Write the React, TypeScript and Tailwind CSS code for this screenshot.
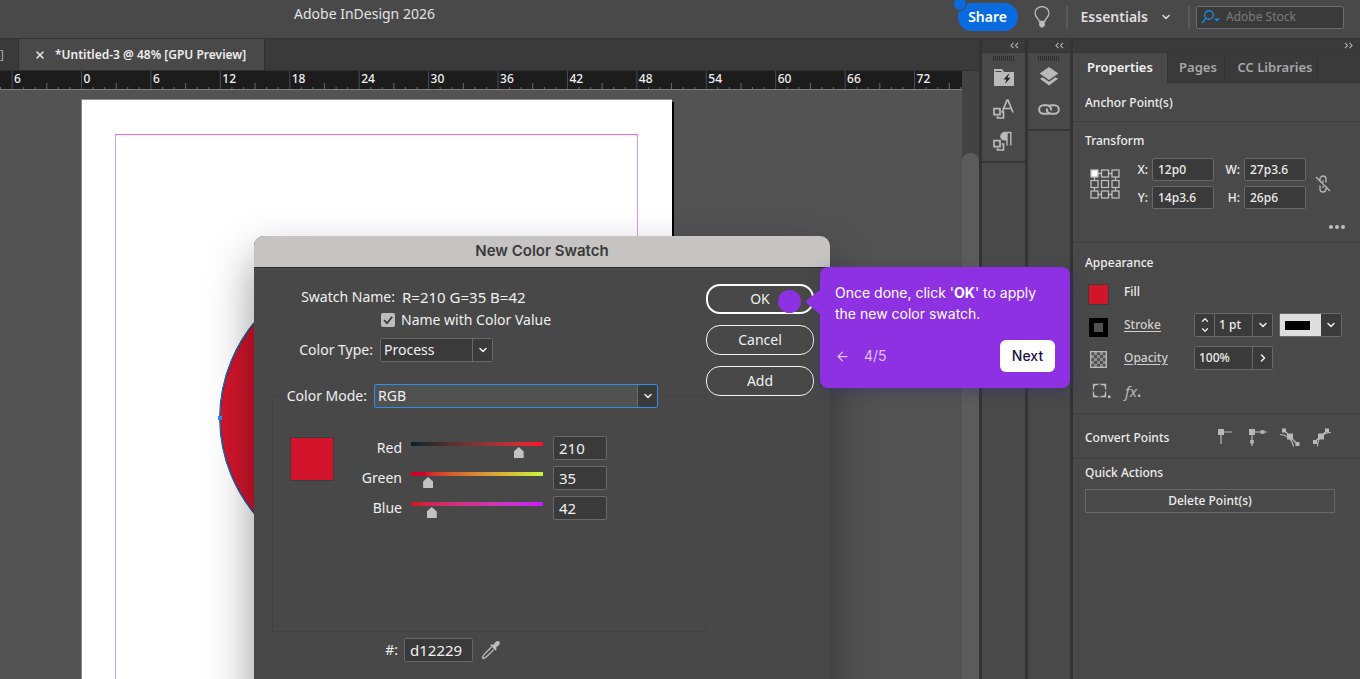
import { useState } from "react"
import type { ReactNode } from "react"
import clsx from "clsx"
import { ArrowLeft, ChevronDown, ChevronRight, ChevronUp, X } from "lucide-react"

// Six picas on the ruler at the current zoom
const RULER_STEP = 69.42
const RULER_ORIGIN = 81.5

function Ruler() {
  const ticks = []
  for (let i = -7; i <= 76; i++) {
    const x = RULER_ORIGIN + (i * RULER_STEP) / 6
    const major = i % 6 === 0
    const half = i % 3 === 0
    ticks.push(
      <line
        key={i}
        x1={x}
        x2={x}
        y1={major ? 0 : half ? 12 : 16}
        y2={18}
        stroke={major ? "#4d4d4d" : "#6a6a6a"}
      />
    )
  }

  return (
    <svg className="block h-[18px] w-full bg-[#1c1c1c]" aria-hidden="true">
      {ticks}
      {Array.from({ length: 14 }, (_, i) => i - 1).map((i) => (
        <text
          key={i}
          x={RULER_ORIGIN + i * RULER_STEP + 2}
          y={12}
          className="fill-[#f0f0f0] text-[12px] font-medium"
        >
          {Math.abs(i * 6)}
        </text>
      ))}
    </svg>
  )
}

function Artboard() {
  return (
    <div className="relative flex-1 overflow-hidden bg-[#535353] border-t border-[#808080]">
      <div className="absolute left-[83px] top-[12px] h-[800px] w-[591px] bg-black" />
      <div className="absolute left-[81px] top-[9px] h-[800px] w-[591px] border-l border-t border-[#8c8c8c] bg-white" />
      <div className="absolute left-[115px] top-[44px] h-[800px] w-[523px] border-x border-t border-x-[#cf9bff] border-t-[#ff5cf4]" />
      <svg className="absolute left-[215px] top-[170px]" width="330" height="320" viewBox="0 0 330 320">
        <ellipse cx="163" cy="158" rx="158" ry="153" fill="#d3152c" stroke="#1c2c44" strokeWidth="1.6" />
        <ellipse cx="163" cy="158" rx="158" ry="153" fill="none" stroke="#2179d0" strokeWidth="1" />
        <rect x="3" y="156" width="4" height="4" fill="#1e90ff" />
      </svg>
    </div>
  )
}

function DropDown({
  options,
  id,
  className,
  boxClassName,
}: {
  options: string[]
  id: string
  className?: string
  boxClassName?: string
}) {
  return (
    <span className={clsx("relative inline-flex h-6", className)}>
      <select
        id={id}
        className={clsx("h-full w-full appearance-none rounded-[2px] border pl-[3px] pr-6 outline-none", boxClassName)}
      >
        {options.map((o) => (
          <option key={o}>{o}</option>
        ))}
      </select>
      <span className="pointer-events-none absolute inset-y-px right-px flex w-5 items-center justify-center border-l border-[#686868] bg-[#3a3a3a]">
        <ChevronDown className="h-3 w-3" strokeWidth={3} />
      </span>
    </span>
  )
}

const channels = [
  { name: "Red", value: 210, track: "bg-linear-to-r from-[#06222a] to-[#ff0a2c]" },
  { name: "Green", value: 35, track: "bg-linear-to-r from-[#cc0029] from-10% to-[#c8f53a]" },
  { name: "Blue", value: 42, track: "bg-linear-to-r from-[#d4141c] to-[#cb16ff]" },
]

function ChannelRow({ name, initial, track }: { name: string; initial: number; track: string }) {
  const [value, setValue] = useState(initial)
  const id = `channel-${name.toLowerCase()}`

  return (
    <div className="flex h-6 items-center">
      <label htmlFor={id} className="w-[68px] text-right">
        {name}
      </label>
      <div className="ml-[9px] flex w-[132px] flex-col pt-1">
        <div className={clsx("h-1 w-full", track)} />
        <input
          type="range"
          min={0}
          max={255}
          value={value}
          onChange={(e) => setValue(Number(e.target.value))}
          aria-label={`${name} slider`}
          className="-mx-[6px] mt-px block h-3 w-[142px] appearance-none bg-transparent [&::-webkit-slider-thumb]:h-[11px] [&::-webkit-slider-thumb]:w-[10px] [&::-webkit-slider-thumb]:appearance-none [&::-webkit-slider-thumb]:bg-[#c2c2c2] [&::-webkit-slider-thumb]:[clip-path:polygon(0_40%,50%_0,100%_40%,100%_100%,0_100%)]"
        />
      </div>
      <input
        id={id}
        value={value}
        onChange={(e) => setValue(Number(e.target.value) || 0)}
        className="ml-[10px] h-6 w-[54px] rounded-[2px] border border-[#686868] bg-[#3a3a3a] px-[5px] text-[15px]"
      />
    </div>
  )
}

function EyedropperIcon() {
  return (
    <svg width="20" height="20" viewBox="0 0 20 20" fill="none" aria-hidden="true">
      <path d="M10.5 7 3.2 14.4C2 15.600 2.200 16.600 1.300 17.600l1 1c1-.9 2-.7 3.200-1.900L13 9.400" stroke="#bdbdbd" strokeWidth="1.300" />
      <path d="m9.200 5.200 1.300-1.200 1.400 1.200 2.600-3.200c1.200-1.400 2.700-1.400 3.700-.5s.9 2.500-.4 3.700l-3.100 2.700 1.200 1.400-1.300 1.300z" fill="#bdbdbd" />
    </svg>
  )
}

function SwatchDialog() {
  return (
    <section
      role="dialog"
      aria-labelledby="dialog-title"
      className="absolute left-[254px] top-[236px] flex h-[520px] w-[576px] flex-col overflow-hidden rounded-t-[10px] bg-[#484848] text-sm text-[#f0f0f0] shadow-[0_22px_46px_0px_rgba(0,0,0,0.42)]"
    >
      <h2
        id="dialog-title"
        className="h-8 border-b border-[#2a2a2a] bg-[#c6c4c2] text-center font-['Inter',sans-serif] text-[15px] font-semibold leading-[30px] text-[#3a3938]"
      >
        New Color Swatch
      </h2>
      <div className="flex justify-between pl-[18px] pr-4 pt-4">
        <div className="w-[434px]">
          <div className="flex gap-[7px] pt-[3px] leading-5">
            <span className="w-[123px] text-right">Swatch Name:</span>
            <span className="text-[15px]">R=210 G=35 B=42</span>
          </div>
          <div className="ml-[109px] mt-[3px] flex items-center gap-[6px] leading-5">
            <span className="relative flex h-[14px] w-[14px]">
              <input
                id="name-with-value"
                type="checkbox"
                defaultChecked
                className="peer h-[14px] w-[14px] appearance-none rounded-[2px] bg-[#bcbcbc]"
              />
              <svg className="pointer-events-none absolute inset-0 hidden peer-checked:block" width="14" height="14" viewBox="0 0 14 14">
                <path d="m3 7 3 3.2L11.2 3.8" fill="none" stroke="#3a3a3a" strokeWidth="1.8" />
              </svg>
            </span>
            <label htmlFor="name-with-value">Name with Color Value</label>
          </div>
          <div className="mt-2 flex items-center gap-[7px]">
            <label htmlFor="color-type" className="w-[101px] text-right">
              Color Type:
            </label>
            <DropDown id="color-type" options={["Process", "Spot"]} className="w-[113px]" boxClassName="border-[#686868] bg-[#3a3a3a]" />
          </div>
          <fieldset className="mt-[22px] h-[248px] border border-[#424242]">
            <legend className="ml-3 flex items-center gap-[7px] pr-1">
              <label htmlFor="color-mode" className="w-[82px] text-right whitespace-nowrap">
                Color Mode:
              </label>
              <DropDown id="color-mode" options={["RGB", "CMYK", "Lab"]} className="w-[284px]" boxClassName="border-[#2f8ee8] bg-[#515151]" />
            </legend>
            <div className="flex pl-[17px] pt-7">
              <div className="mt-px h-11 w-11 border border-[#3c3c3c] bg-[#d3152c]" />
              <div className="flex flex-col gap-[6px]">
                {channels.map((c) => (
                  <ChannelRow key={c.name} name={c.name} initial={c.value} track={c.track} />
                ))}
              </div>
            </div>
          </fieldset>
          <div className="mt-[6px] flex items-center">
            <label htmlFor="hex" className="w-[126px] text-right">
              #:
            </label>
            <input
              id="hex"
              defaultValue="d12229"
              className="ml-[6px] h-6 w-[69px] rounded-[2px] border border-[#686868] bg-[#3a3a3a] px-[5px] text-[15px]"
            />
            <button className="ml-2" aria-label="Pick color">
              <EyedropperIcon />
            </button>
          </div>
        </div>
        <div className="flex flex-col gap-[11px] self-start">
          <button className="h-[30px] w-[108px] rounded-[14px] border-2 border-white">OK</button>
          <button className="h-[30px] w-[108px] rounded-[14px] border border-[#f4f4f4]">Cancel</button>
          <button className="h-[30px] w-[108px] rounded-[14px] border border-[#f4f4f4]">Add</button>
        </div>
      </div>
    </section>
  )
}

function TourTip() {
  return (
    <>
      <div className="absolute left-[778px] top-[290px] h-[23px] w-[23px] rounded-full bg-[#8d31e2]" />
      <aside className="absolute left-[820px] top-[267px] w-[250px] rounded-lg bg-[#8d31e2] px-[15px] pb-4 pt-[15px] font-['Inter',sans-serif] text-sm text-white shadow-[0_4px_14px_rgba(50,50,110,0.5)]">
        <svg className="absolute -left-[15px] top-[22px]" width="16" height="26" viewBox="0 0 16 26" aria-hidden="true">
          <path d="M16 0v26L2 14.600Q0 13 2 11Z" fill="#8d31e2" />
        </svg>
        <p className="leading-[21px]">
          Once done, click &apos;<b>OK</b>&apos; to apply
          <br />
          the new color swatch.
        </p>
        <div className="mt-4 flex items-center text-[#dcc4f6]">
          <button aria-label="Previous step">
            <ArrowLeft className="h-[15px] w-[15px]" />
          </button>
          <span className="ml-[14px]">4/5</span>
          <button className="ml-auto h-8 w-[55px] rounded-md bg-white font-medium text-[#1b1142]">Next</button>
        </div>
      </aside>
    </>
  )
}

function Header() {
  return (
    <header className="flex h-[39px] shrink-0 items-center border-b border-[#333] bg-[#494949] pb-1 pr-4">
      <h1 className="pb-[6px] pl-[294px] text-sm text-[#e2e2e2]">Adobe InDesign 2026</h1>
      <div className="ml-auto flex items-center">
        <span className="relative">
          <button className="h-7 w-[60px] rounded-full bg-[#0a6be0] text-sm font-semibold text-white">Share</button>
          <span className="absolute -left-[4px] -top-[5px] h-3 w-3 rounded-full bg-[#0a6be0] ring-1 ring-[#494949]" />
        </span>
        <button className="ml-4" aria-label="Learn">
          <svg width="16" height="22" viewBox="0 0 16 22" fill="none">
            <path d="M5.2 15.3c0-2.6-4.2-4-4.2-8a7 6.7 0 0 1 14 0c0 4-4.2 5.400-4.200 8z" stroke="#bdbdbd" strokeWidth="1.3" />
            <path d="M5.200 15h5.600v4.500L9 21.500H7L5.200 19.500z" fill="#bdbdbd" />
          </svg>
        </button>
        <span className="ml-4 h-[23px] w-0.5 bg-[#5a5a5a]" />
        <button className="ml-[13px] flex items-center gap-3 text-sm font-semibold text-[#dedede]">
          Essentials
          <ChevronDown className="h-3 w-3" strokeWidth={3} />
        </button>
        <span className="ml-4 mr-[6px] h-[23px] w-0.5 bg-[#5a5a5a]" />
        <label className="flex h-[23px] w-[148px] items-center rounded-[2px] border border-[#6c6c6c] bg-[#3a3a3a] pl-1">
          <svg className="shrink-0" width="20" height="16" viewBox="0 0 20 16" aria-hidden="true">
            <circle cx="8" cy="6" r="4.300" fill="none" stroke="#2385dc" strokeWidth="1.4" />
            <path d="M5 9.200 1 14" stroke="#2385dc" strokeWidth="1.500" />
            <path d="M13 9.500h6l-3 3.300z" fill="#2385dc" />
          </svg>
          <input
            aria-label="Adobe Stock"
            placeholder="Adobe Stock"
            className="ml-[5px] w-full min-w-0 bg-transparent text-[12px] outline-none placeholder:text-[#7c7c7c]"
          />
        </label>
      </div>
    </header>
  )
}

function DoubleChevron({ flip }: { flip?: boolean }) {
  return (
    <svg className={clsx(flip && "rotate-180")} width="9" height="7" viewBox="0 0 9 7" fill="none" aria-hidden="true">
      <path d="M3.500.8 1 3.500l2.500 2.700M8 .8 5.500 3.500 8 6.200" stroke="#b5b5b5" strokeWidth="1.100" />
    </svg>
  )
}

function Grip() {
  return (
    <svg className="mx-auto block" width="22" height="5" viewBox="0 0 22 5" aria-hidden="true">
      {Array.from({ length: 11 }, (_, i) => (
        <rect key={i} x={i * 2} y="0" width="1" height="5" fill="#303030" />
      ))}
    </svg>
  )
}

function Dock({ className, children }: { className: string; children: ReactNode }) {
  return (
    <div className={clsx("flex flex-col bg-[#494949]", className)}>
      <div className="flex h-[13px] shrink-0 items-center justify-end bg-[#3a3a3a] pr-[6px]">
        <DoubleChevron />
      </div>
      <div className="flex flex-col items-center border-b-2 border-t border-[#363636] pb-1 pt-[3px]">
        <Grip />
        {children}
      </div>
    </div>
  )
}

const dockButton = "flex h-8 w-full items-center justify-center"

// The two overlapping squares shared by the style panels
const stackedSquares = (
  <>
    <path d="M1 9.700h6v6H1z" stroke="#bababa" strokeWidth="1.700" />
    <path d="M8.500 13h2v6h-6v-2" stroke="#bababa" strokeWidth="1.700" />
  </>
)

function StyleDock() {
  return (
    <Dock className="w-[43px]">
      <button className={dockButton} aria-label="Styles">
        <svg width="20" height="17" viewBox="0 0 20 17">
          <path d="M0 0h8l2 3h10v14H0z" fill="#bababa" />
          <path d="M1.500 2.500h6" stroke="#494949" />
          <path d="m15.500 4-6 6.500h3l-1.500 4.500 5.500-6.200h-3z" fill="#222" />
        </svg>
      </button>
      <button className={dockButton} aria-label="Character styles">
        <svg width="21" height="21" viewBox="0 0 21 21" fill="none">
          {stackedSquares}
          <path d="M9 13.500 14 1.200h1l5 12.300M10.800 9.500h7.400" stroke="#bababa" strokeWidth="1.700" />
        </svg>
      </button>
      <button className={dockButton} aria-label="Paragraph styles">
        <svg width="21" height="21" viewBox="0 0 21 21" fill="none">
          {stackedSquares}
          <path d="M14 1h-2.500a4.300 4.300 0 0 0 0 8.600H14z" fill="#bababa" />
          <path d="M11 1.500h7.500M14 1.500v13M17.800 1.500v13" stroke="#bababa" strokeWidth="1.400" />
        </svg>
      </button>
    </Dock>
  )
}

function LayerDock() {
  return (
    <Dock className="w-[42px]">
      <button className={dockButton} aria-label="Layers">
        <svg width="20" height="20" viewBox="0 0 20 20" fill="#bababa">
          <path d="M10 0 19.300 6.500 10 13 .7 6.500z" />
          <path d="m1 11.800 2.500-1.600L10 14.800l6.500-4.600 2.500 1.600-9 6.700z" />
        </svg>
      </button>
      <button className={dockButton} aria-label="Links">
        <svg width="22" height="11" viewBox="0 0 22 11" fill="none" stroke="#bababa" strokeWidth="2">
          <path d="M12 8.500C11 9.500 10 9.800 9 9.800H5.500a4.200 4.200 0 0 1 0-8.600H9a4.200 4.200 0 0 1 4 5.300" />
          <path d="M10 2.500c1-1 2-1.300 3-1.300h3.500a4.200 4.200 0 0 1 0 8.600H13A4.200 4.200 0 0 1 9 4.500" />
        </svg>
      </button>
    </Dock>
  )
}

function TransformField({ label, value }: { label: string; value: string }) {
  return (
    <label className="flex items-center text-[12px]">
      <span className="w-[18px] text-right">{label}:</span>
      <input
        defaultValue={value}
        className="ml-1 h-[23px] w-[62px] rounded-[2px] border border-[#686868] bg-[#3a3a3a] px-[5px]"
      />
    </label>
  )
}

function ReferencePoints() {
  const spots = [1, 11.500, 22]
  return (
    <svg width="30" height="30" viewBox="0 0 30 30" fill="none" stroke="#bdbdbd" strokeWidth="1.300" aria-hidden="true">
      {spots.map((y, r) =>
        spots.map((x, c) => (
          <rect key={`${r}${c}`} x={x} y={y} width="7" height="7" fill={r + c === 0 ? "#fff" : "none"} />
        ))
      )}
      <path d="M8 4.500h3.500M18.500 4.500H22M8 25.500h3.500M18.500 25.500H22M4.500 8v3.500M4.500 18.500V22M25.500 8v3.500M25.500 18.500V22" />
    </svg>
  )
}

function ConvertIcons() {
  const points = [
    {
      name: "Plain",
      art: <path d="M5 5v11M5 4h11" />,
      fill: <path d="M2 1h6v6H2z" />,
    },
    {
      name: "Corner",
      art: <path d="M4 4v14M4 4h15" />,
      fill: <path d="M1 1h6v6H1zM12.500 2.200h4v3.600h-4zM2.200 12h3.600v3.500H2.200z" />,
    },
    {
      name: "Smooth",
      art: <path d="m4 2 14 15M0 6.500c6 0 12 4 13.500 12" />,
      fill: <path d="M7 5.500h6v6H7zM2 .5h4v4H2zM15.500 14h4v4h-4z" />,
    },
    {
      name: "Symmetrical",
      art: <path d="M3 13.500 15 2.500M19 4.500C11 4.500 5.500 10 5.500 18.500" />,
      fill: <path d="M6 5.500h6v6H6zM13 .5h4v4h-4zM1 12h4v4H1z" />,
    },
  ]
  return (
    <div className="flex gap-3 pt-[3px]">
      {points.map((p) => (
        <button key={p.name} aria-label={p.name}>
          <svg width="20" height="20" viewBox="0 0 20 20">
            <g fill="none" stroke="#b8b8b8" strokeWidth="1.200">{p.art}</g>
            <g fill="#b8b8b8">{p.fill}</g>
          </svg>
        </button>
      ))}
    </div>
  )
}

function AppearanceSection() {
  return (
    <section className="h-[171px] border-b border-[#404040] pl-3 pt-[10px]">
      <h3 className="leading-5">Appearance</h3>
      <div className="mt-[7px] flex h-6 items-center">
        <span className="ml-[3px] mt-1 h-[21px] w-[21px] border border-[#3d3d3d] bg-[#d3152c]" />
        <span className="ml-[15px]">Fill</span>
      </div>
      <div className="mt-[9px] flex h-6 items-center">
        <span className="ml-[4px] mt-1 h-[19px] w-[19px] border-[5px] border-black bg-[#505050]" />
        <a href="#stroke" className="ml-4 w-[70px] text-[#cfcfcf] underline underline-offset-2">Stroke</a>
        <div className="flex h-6 w-[79px] rounded-[2px] border border-[#686868] bg-[#3a3a3a]">
          <button className="flex w-5 shrink-0 flex-col items-center justify-between border-r border-[#686868] py-px" aria-label="Step stroke weight">
            <ChevronUp className="h-[10px] w-3" strokeWidth={3} />
            <ChevronDown className="h-[10px] w-3" strokeWidth={3} />
          </button>
          <input aria-label="Stroke weight" defaultValue="1 pt" className="w-full min-w-0 pl-1" />
          <button className="flex w-5 shrink-0 items-center justify-center border-l border-[#686868]" aria-label="Stroke weight presets">
            <ChevronDown className="h-3 w-3" strokeWidth={3} />
          </button>
        </div>
        <button className="ml-[6px] flex h-6 w-[63px] rounded-[2px] border border-[#686868] bg-[#3a3a3a]" aria-label="Stroke type">
          <span className="flex h-full flex-1 items-center bg-[#dedede] pl-[5px]">
            <span className="h-[9px] w-[25px] bg-black" />
          </span>
          <span className="flex h-full w-5 items-center justify-center">
            <ChevronDown className="h-3 w-3" strokeWidth={3} />
          </span>
        </button>
      </div>
      <div className="mt-[9px] flex h-6 items-center">
        <svg className="ml-[5px] mt-[3px]" width="17" height="17" viewBox="0 0 17 17" aria-hidden="true">
          {Array.from({ length: 25 }, (_, i) => (
            <rect key={i} x={1 + (i % 5) * 3} y={1 + Math.floor(i / 5) * 3} width="3" height="3" fill={i % 2 ? "#8e8e8e" : "#525252"} />
          ))}
          <path d="M.7.7h15.600v15.600H.7z" fill="none" stroke="#bdbdbd" strokeWidth="1.300" />
        </svg>
        <a href="#opacity" className="ml-[17px] w-[70px] text-[#cfcfcf] underline underline-offset-2">Opacity</a>
        <div className="flex h-6 w-[79px] rounded-[2px] border border-[#686868] bg-[#3a3a3a]">
          <input aria-label="Opacity" defaultValue="100%" className="w-full min-w-0 px-1" />
          <button className="flex w-5 shrink-0 items-center justify-center border-l border-[#686868]" aria-label="Opacity slider">
            <ChevronRight className="h-3 w-3" strokeWidth={3} />
          </button>
        </div>
      </div>
      <div className="mt-[9px] flex h-6 items-center">
        <button className="ml-[7px]" aria-label="Corner options">
          <svg width="19" height="16" viewBox="0 0 19 16" fill="none">
            <path d="M1.500 1.500h12v12h-12z" stroke="#bdbdbd" strokeWidth="1.300" />
            <path d="M1 1h3v3H1zM11 1h3v3h-3zM1 11h3v3H1zM11 11h3v3h-3z" fill="#bdbdbd" />
            <path d="M2.500 2.500h10v10h-10z" fill="#494949" />
            <path d="M7.500 1v1.500M7.500 12.500V14M1 7.500h1.500M12.500 7.500H14" stroke="#494949" strokeWidth="2" />
            <path d="M16 12.500h2.500V15H16z" fill="#bdbdbd" />
          </svg>
        </button>
        <button className="ml-[14px] flex items-end text-[15px] font-normal italic text-[#b8b8b8]" aria-label="Effects">
          fx<span className="font-bold not-italic">.</span>
        </button>
      </div>
    </section>
  )
}

function PropertiesPanel() {
  return (
    <div className="flex w-[287px] flex-col bg-[#494949] text-[12px] font-medium text-[#ededed]">
      <div className="flex h-[13px] shrink-0 items-center justify-end bg-[#3a3a3a] pr-[7px]">
        <DoubleChevron flip />
      </div>
      <div role="tablist" className="flex h-[31px] shrink-0 border-t border-[#363636] bg-[#3a3a3a] text-[13px] font-semibold text-[#a8a8a8]">
        <button role="tab" aria-selected="true" className="w-[94px] bg-[#494949] text-[#f2f2f2]">Properties</button>
        <button role="tab" className="w-[57px] border-b border-l border-[#333] pl-1">Pages</button>
        <button role="tab" className="w-[94px] whitespace-nowrap border-b border-x border-[#333] pl-2">CC Libraries</button>
        <span className="flex-1 border-b border-[#333]" />
      </div>
      <h2 className="h-[39px] border-b border-[#404040] pl-3 pt-[10px] leading-5">Anchor Point(s)</h2>
      <section className="h-[121px] border-b border-[#404040] pl-3 pt-[9px]">
        <h3 className="leading-5">Transform</h3>
        <div className="mt-[7px] flex items-center">
          <span className="ml-[5px]">
            <ReferencePoints />
          </span>
          <div className="ml-[10px] grid grid-cols-2 gap-x-2 gap-y-[5px]">
            <TransformField label="X" value="12p0" />
            <TransformField label="W" value="27p3.6" />
            <TransformField label="Y" value="14p3.6" />
            <TransformField label="H" value="26p6" />
          </div>
          <button className="ml-[9px]" aria-label="Constrain proportions">
            <svg width="16" height="18" viewBox="0 0 16 18" fill="none" stroke="#b8b8b8" strokeWidth="1.300">
              <path d="M5 6V4a3 3 0 0 1 6 0v3.500M11 11v3a3 3 0 0 1-6 0v-3.500M8 5.500v2M8 11v2M1 2l14 14" />
            </svg>
          </button>
        </div>
        <button className="ml-auto mr-[15px] mt-4 flex gap-[2px]" aria-label="More options">
          <span className="h-1 w-1 rounded-full bg-[#bdbdbd]" />
          <span className="h-1 w-1 rounded-full bg-[#bdbdbd]" />
          <span className="h-1 w-1 rounded-full bg-[#bdbdbd]" />
        </button>
      </section>
      <AppearanceSection />
      <section className="flex h-[45px] items-center justify-between border-b border-[#404040] pl-3 pr-7">
        <h3 className="pt-[3px]">Convert Points</h3>
        <ConvertIcons />
      </section>
      <section className="pl-3 pr-[25px] pt-1">
        <h3 className="leading-5">Quick Actions</h3>
        <button className="mt-[6px] h-6 w-full border border-[#686868]">Delete Point(s)</button>
      </section>
    </div>
  )
}

export default function App() {
  return (
    <div className="relative flex h-screen flex-col overflow-hidden bg-[#333] font-['Noto_Sans',sans-serif]">
      <Header />
      <main className="flex min-h-0 flex-1 gap-[3px]">
        <div className="flex min-w-0 flex-1 flex-col">
          <div className="flex h-8 shrink-0 border-b border-[#303030] bg-[#3a3a3a] text-[12px]">
            <div className="flex w-[19px] items-center border-r border-[#303030] text-[#a8a8a8]">]</div>
            <div className="flex w-[246px] items-center border-r border-[#303030] bg-[#494949] pl-[15px] font-semibold text-[#ededed]">
              <button aria-label="Close document">
                <X className="h-3 w-3" strokeWidth={3} />
              </button>
              <span className="ml-[9px] whitespace-nowrap">*Untitled-3 @ 48% [GPU Preview]</span>
            </div>
          </div>
          <div className="flex min-h-0 flex-1">
            <div className="flex min-w-0 flex-1 flex-col">
              <Ruler />
              <Artboard />
            </div>
            <div className="w-[17px] bg-[#434343] pt-[82px]">
              <div className="h-full rounded-t-lg bg-[#5c5c5c]" />
            </div>
          </div>
        </div>
        <StyleDock />
        <LayerDock />
        <PropertiesPanel />
      </main>
      <SwatchDialog />
      <TourTip />
    </div>
  )
}
